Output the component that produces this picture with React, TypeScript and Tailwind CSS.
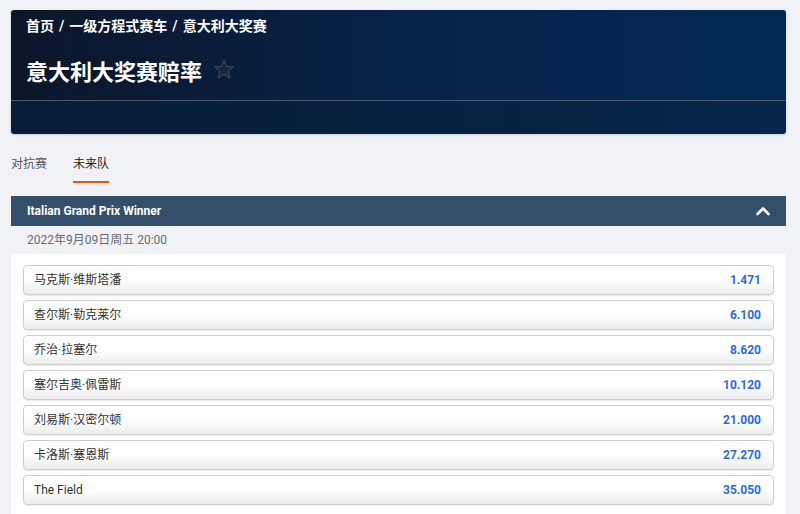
import React from "react";

const rows = [
  ["马克斯·维斯塔潘", "1.471"],
  ["查尔斯·勒克莱尔", "6.100"],
  ["乔治·拉塞尔", "8.620"],
  ["塞尔吉奥·佩雷斯", "10.120"],
  ["刘易斯·汉密尔顿", "21.000"],
  ["卡洛斯·塞恩斯", "27.270"],
  ["The Field", "35.050"],
];

export default function App() {
  return (
    <div
      className="min-h-[514px] w-[800px] bg-[#f1f2f6] pl-[11px] pr-[14px] pt-[10px]"
      style={{ fontFamily: 'Roboto, "Noto Sans CJK SC", sans-serif' }}
    >
      {/* Header */}
      <div className="overflow-hidden rounded-[3px] shadow-[0_1px_3px_rgba(0,0,0,0.15)]">
        <div className="h-[90px] bg-gradient-to-r from-[#0b1629] via-[#06234a] to-[#032a53] px-[15px] pt-[6px]">
          <div className="flex gap-[5px] text-[14px] font-semibold leading-[20px] text-white">
            <span>首页</span>
            <span>/</span>
            <span>一级方程式赛车</span>
            <span>/</span>
            <span>意大利大奖赛</span>
          </div>
          <div className="mt-[22px] flex items-center">
            <h1 className="text-[22px] font-bold leading-[30px] text-white">意大利大奖赛赔率</h1>
            <svg width="22" height="22" viewBox="0 0 24 24" className="ml-[11px] -mt-[8px]">
              <path
                d="M12 2.5l2.9 6.6 7.1.6-5.4 4.7 1.6 7-6.2-3.7-6.2 3.7 1.6-7L2 9.7l7.1-.6z"
                fill="#1a2638"
                stroke="#3b4658"
                strokeWidth="1.3"
                strokeLinejoin="round"
              />
            </svg>
          </div>
        </div>
        <div className="h-px bg-[#4b5a70]" />
        <div className="h-[33px] bg-gradient-to-r from-[#071c36] to-[#06264a]" />
      </div>

      {/* Tabs */}
      <div className="mt-[21px] flex gap-[26px] text-[12px] leading-[18px]">
        <div className="text-[#555]">对抗赛</div>
        <div className="flex flex-col">
          <div className="text-[#222]">未来队</div>
          <div className="mt-[8px] h-[2px] w-[36px] bg-[#f0500f]" />
        </div>
      </div>

      {/* Section bar */}
      <div className="mt-[13px] flex h-[30px] items-center justify-between bg-[#344f6b] pl-[16px] pr-[16px]">
        <div className="text-[12px] font-bold text-white">Italian Grand Prix Winner</div>
        <svg width="14" height="10" viewBox="0 0 14 10">
          <polyline
            points="1.5,8 7,2.5 12.5,8"
            fill="none"
            stroke="#ffffff"
            strokeWidth="2.6"
            strokeLinecap="round"
            strokeLinejoin="round"
          />
        </svg>
      </div>
      <div className="flex h-[28px] items-center pl-[16px] text-[12px] text-[#6b6b6b]">
        2022年9月09日周五 20:00
      </div>

      {/* Rows */}
      <div className="flex flex-col gap-[5px] bg-white px-[12px] pb-[12px] pt-[11px]">
        {rows.map(([name, odd]) => (
          <div
            key={name}
            className="flex h-[30px] items-center justify-between rounded-[4px] border border-[#cfcfcf] bg-gradient-to-b from-white via-white to-[#ececec] pl-[10px] pr-[12px] shadow-[0_1px_1px_rgba(0,0,0,0.08)]"
          >
            <span className="text-[12px] text-[#333]">{name}</span>
            <span className="text-[12px] font-bold text-[#2b6be0]">{odd}</span>
          </div>
        ))}
      </div>
    </div>
  );
}
